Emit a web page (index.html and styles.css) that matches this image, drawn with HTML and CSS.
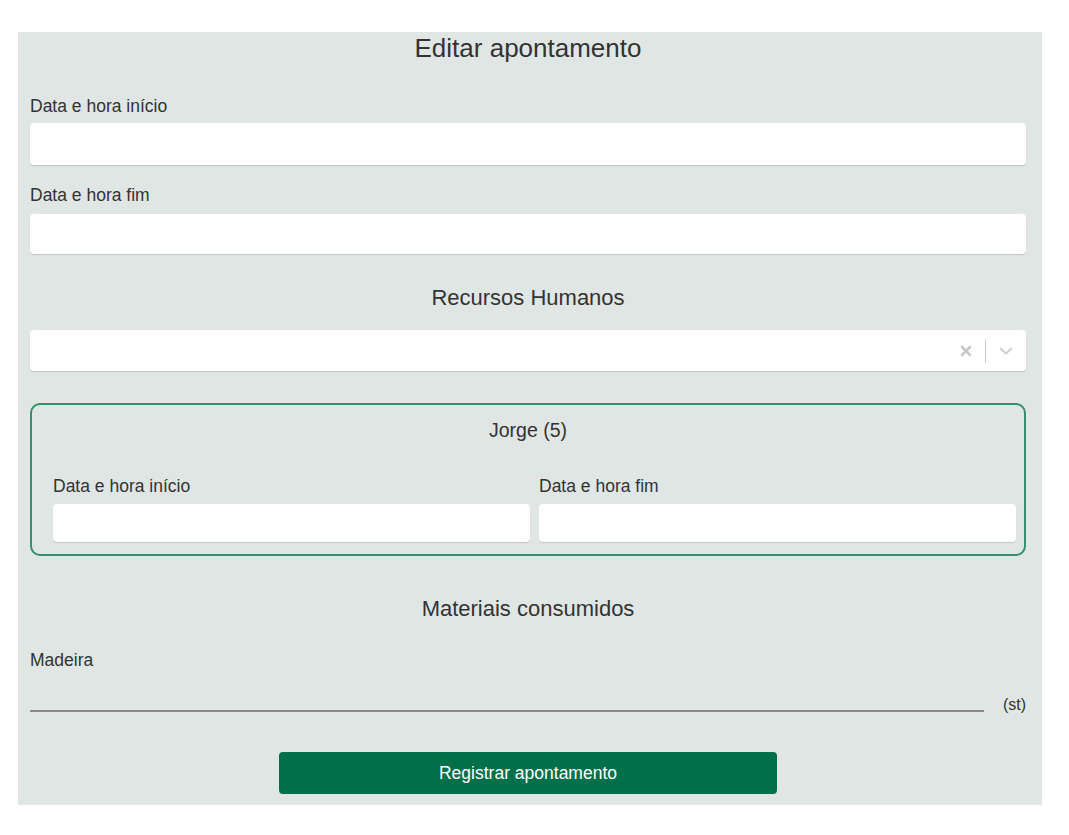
FILE: index.html
```html
<!DOCTYPE html>
<html lang="pt">
<head>
<meta charset="utf-8">
<title>Editar apontamento</title>
<link rel="stylesheet" href="styles.css">
</head>
<body>
<main class="panel">
  <h1 class="title">Editar apontamento</h1>

  <label class="label label-first">Data e hora início</label>
  <div class="input input-tall"></div>

  <label class="label label-second">Data e hora fim</label>
  <div class="input"></div>

  <h2 class="section">Recursos Humanos</h2>
  <div class="select">
    <div class="select-value"></div>
    <div class="select-indicators">
      <svg class="ind-clear" width="20" height="20" viewBox="0 0 20 20"><path d="M6 6 L14 14 M14 6 L6 14" stroke="#c8c8c8" stroke-width="2.6" stroke-linecap="round"/></svg>
      <span class="ind-sep"></span>
      <svg class="ind-chevron" width="20" height="20" viewBox="0 0 20 20"><path d="M4.5 7.5 L10 12.5 L15.5 7.5" fill="none" stroke="#cccccc" stroke-width="1.8" stroke-linecap="round" stroke-linejoin="round"/></svg>
    </div>
  </div>

  <section class="person">
    <div class="person-name">Jorge (5)</div>
    <div class="person-grid">
      <div class="person-field">
        <label class="label">Data e hora início</label>
        <div class="input input-small"></div>
      </div>
      <div class="person-field">
        <label class="label">Data e hora fim</label>
        <div class="input input-small"></div>
      </div>
    </div>
  </section>

  <h2 class="section section-materials">Materiais consumidos</h2>
  <label class="label label-material">Madeira</label>
  <div class="material-row">
    <div class="line-input"></div>
    <span class="unit">(st)</span>
  </div>

  <div class="actions">
    <button class="btn" type="button">Registrar apontamento</button>
  </div>
</main>
</body>
</html>
```

FILE: styles.css
```css
* { box-sizing: border-box; }

html, body {
  margin: 0;
  padding: 0;
  background: #ffffff;
  font-family: "Liberation Sans", Arial, sans-serif;
  color: #333333;
}

.panel {
  margin: 32px 0 0 18px;
  width: 1024px;
  height: 773px;
  background: #dfe6e3;
  padding: 1px 16px 0 12px;
  display: flex;
  flex-direction: column;
}

.title {
  margin: 0;
  font-size: 26px;
  line-height: 30px;
  font-weight: normal;
  text-align: center;
  color: #333333;
}

.label {
  display: block;
  font-size: 17.5px;
  line-height: 18px;
  color: #333333;
}

.label-first { margin-top: 34px; }
.label-second { margin-top: 21px; }

.input {
  background: #ffffff;
  border-radius: 4px;
  height: 40px;
  margin-top: 10px;
  box-shadow: 0 1px 1px rgba(0, 0, 0, 0.14);
}

.input-tall { height: 42px; margin-top: 8px; }

.section {
  margin: 31px 0 0;
  font-size: 22px;
  line-height: 26px;
  font-weight: normal;
  text-align: center;
  color: #333333;
}

.select {
  margin-top: 19px;
  height: 41px;
  background: #ffffff;
  border-radius: 4px;
  box-shadow: 0 1px 1px rgba(0, 0, 0, 0.14);
  display: flex;
  align-items: center;
}

.select-value { flex: 1; }

.select-indicators {
  display: flex;
  align-items: center;
  padding-right: 10px;
}

.ind-clear { margin-right: 9px; }

.ind-sep {
  width: 1px;
  height: 24px;
  background: #cccccc;
  margin-right: 10px;
}

.person {
  margin-top: 32px;
  border: 2px solid #33906a;
  border-radius: 10px;
  padding: 14px 0 11px 0;
  height: 153px;
}

.person-name {
  text-align: center;
  font-size: 19.5px;
  line-height: 22px;
  color: #333333;
}

.person-grid {
  margin-top: 36px;
  padding: 0 8px 0 21px;
  display: grid;
  grid-template-columns: 1fr 1fr;
  column-gap: 9px;
}

.input-small { height: 38px; margin-top: 9px; }

.section-materials { margin-top: 40px; }

.label-material { margin-top: 29px; }

.material-row {
  margin-top: 13px;
  display: flex;
  align-items: flex-end;
  gap: 19px;
}

.line-input {
  flex: 1;
  height: 30px;
  border-bottom: 2px solid #8c8c8c;
}

.unit {
  font-size: 16px;
  line-height: 14px;
  color: #333333;
}

.actions {
  margin-top: 40px;
  display: flex;
  justify-content: center;
}

.btn {
  width: 498px;
  height: 42px;
  border: none;
  border-radius: 4px;
  background: #00704a;
  color: #ffffff;
  font-family: "Liberation Sans", Arial, sans-serif;
  font-size: 17.5px;
}
```
